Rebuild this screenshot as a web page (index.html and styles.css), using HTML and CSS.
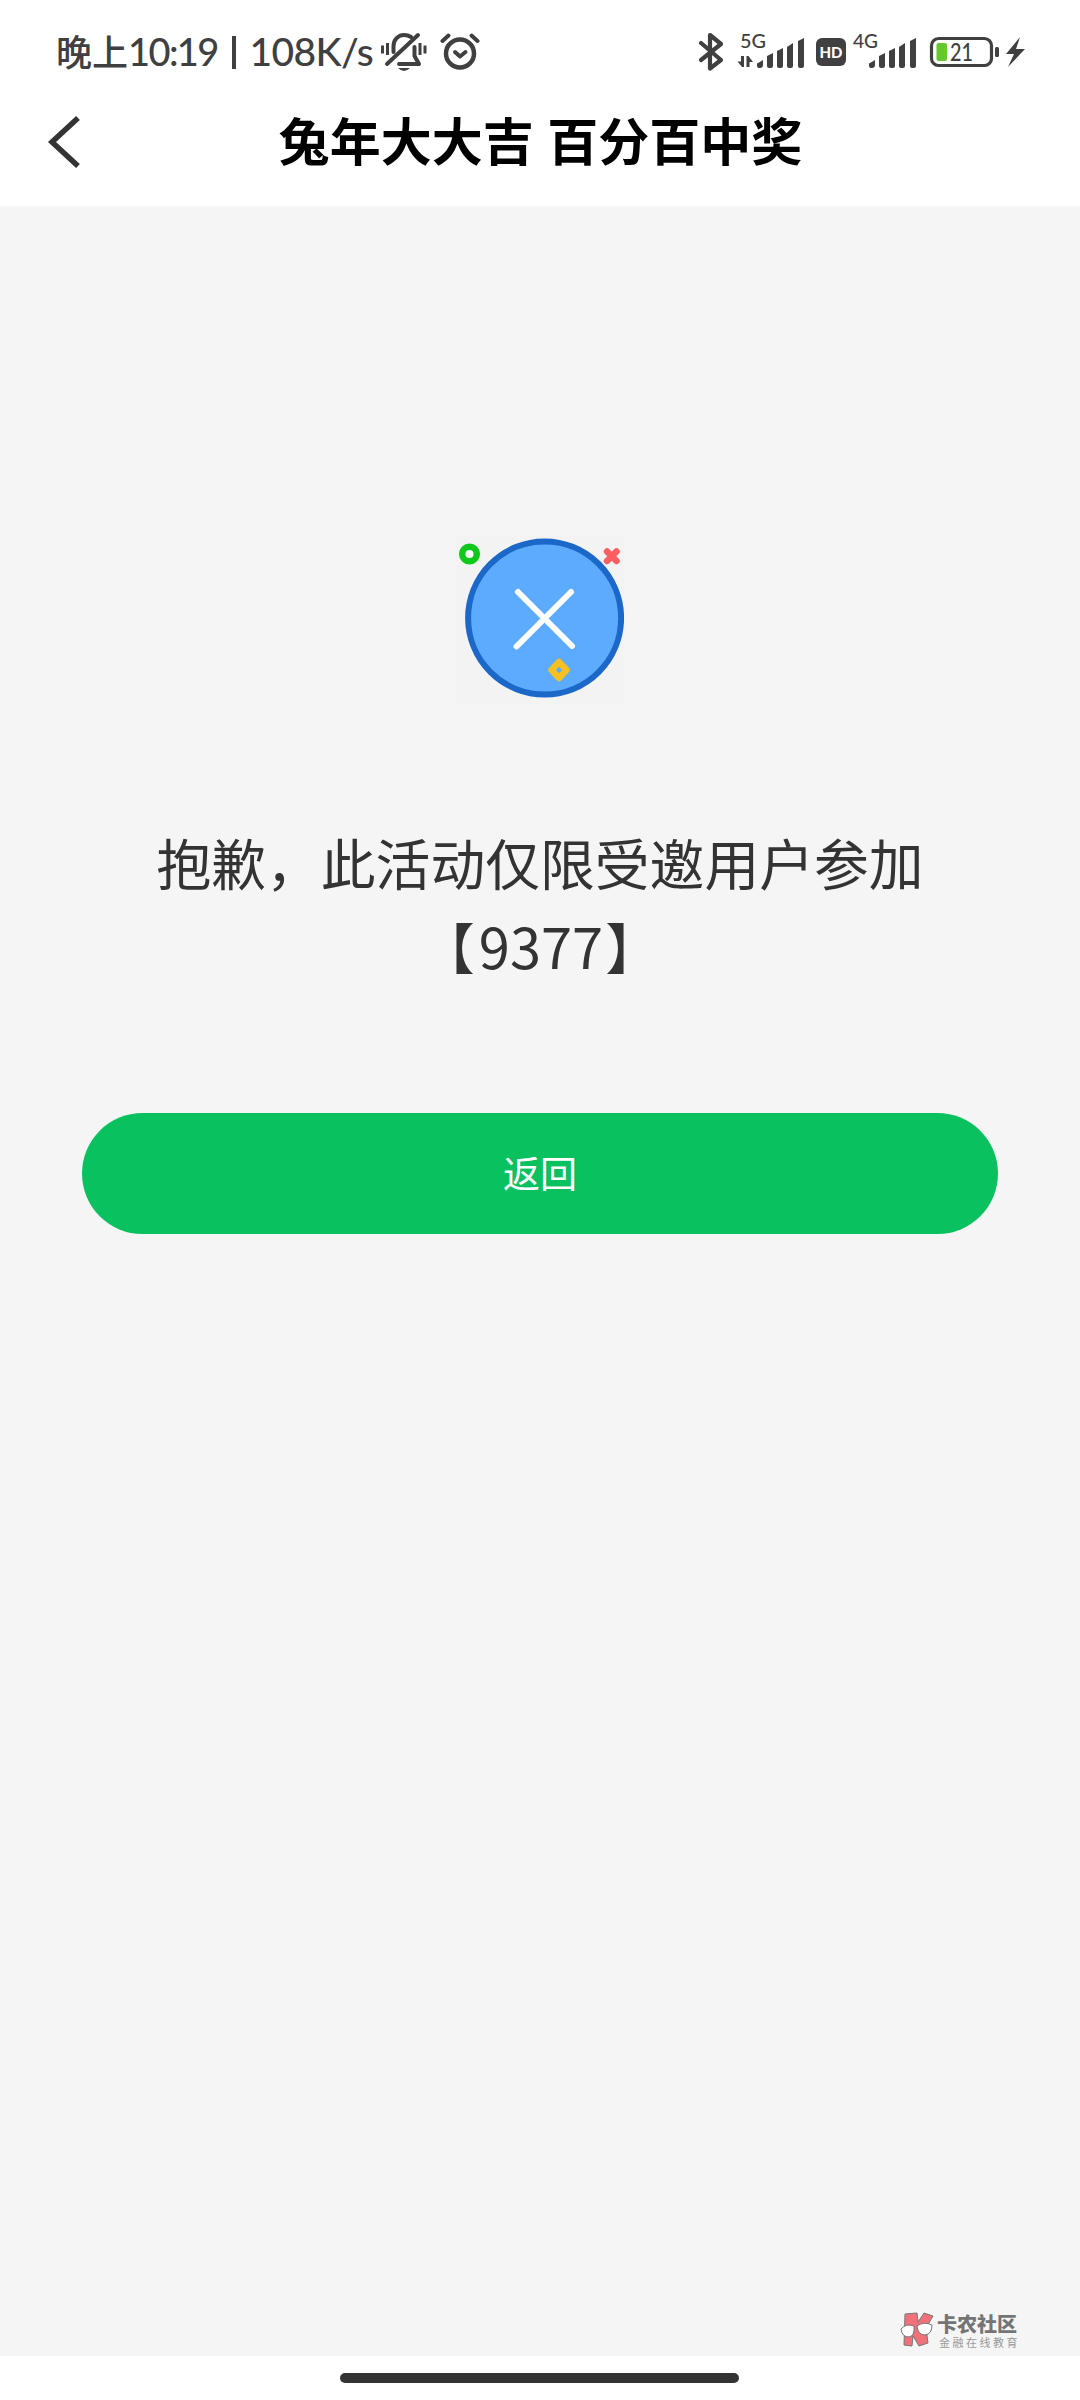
FILE: index.html
```html
<!DOCTYPE html>
<html lang="zh-CN">
<head>
<meta charset="utf-8">
<title>兔年大大吉 百分百中奖</title>
<link rel="stylesheet" href="styles.css">
</head>
<body>
<div class="screen">
  <div class="status">
    <div class="status-left">
      <span class="cjk">晚上</span><span class="clock">10:19</span><span class="divider"></span><span class="speed">108K/s</span>
      <svg class="bell" width="46" height="40" viewBox="0 0 46 40" fill="none" stroke="#404040" stroke-width="4" stroke-linecap="round">
        <path d="M12.500 20V14C12.500 7 18 3 23 3q4 0 7 2M6 32 37 3M33.500 15v9l4.500 8H18" stroke-linejoin="round"/>
        <path d="M1.500 13.500v8M6.500 11v12M39 11v12M44 13.500v8" stroke-width="3" stroke-linecap="butt"/>
        <path d="M17 36h12q-6 6-12 0z" fill="#404040" stroke="none"/>
      </svg>
      <svg class="alarm" width="40" height="40" viewBox="0 0 40 40" fill="none" stroke="#404040" stroke-width="4.500" stroke-linecap="round" stroke-linejoin="round">
        <circle cx="20" cy="21.500" r="14"/><path d="m15 20 5 4.500 5.500-4.500" stroke-width="4"/><path d="m2.500 9 6-5.500M37.500 9l-6-5.500" stroke-width="4"/>
      </svg>
    </div>
    <svg class="status-right" width="330" height="44" viewBox="696 30 330 44">
      <g fill="none" stroke="#404040" stroke-width="4.200" stroke-linejoin="round" stroke-linecap="round"><path d="m701 43 20 17-11 8.500V35L721 44 701 60"/></g>
      <g fill="#404040">
        <text class="net" x="740" y="48" textLength="26" lengthAdjust="spacingAndGlyphs">5G</text>
        <path d="M741 56h3v11h-2l-4.500-5.500h3.500zM746.500 67V56h2l4.500 6h-3.500v5z"/>
        <path id="bars" d="M757 64q0-1 1-1l5-3v5q0 3-3 3h-1q-2 0-2-2zM767 56l6-3v13q0 2-2 2h-2q-2 0-2-2zM777 51l6-3v18q0 2-2 2h-2q-2 0-2-2zM787 47l6-4v23q0 2-2 2h-2q-2 0-2-2zM798 41l6-3v28q0 2-2 2h-2q-2 0-2-2z"/>
        <use href="#bars" x="112"/>
        <rect x="816" y="38" width="30" height="28" rx="6"/>
        <text class="net" x="853" y="48" textLength="25" lengthAdjust="spacingAndGlyphs">4G</text>
        <rect x="995" y="47" width="4" height="10" rx="1.500"/>
        <path d="m1020 37-14 17h8l-6 13 17-18h-9z"/>
      </g>
      <text class="hd" x="819.500" y="58" textLength="23" lengthAdjust="spacingAndGlyphs">HD</text>
      <rect x="931.500" y="38.500" width="60" height="27" rx="7" fill="none" stroke="#404040" stroke-width="3.200"/>
      <rect x="936.500" y="43" width="10.500" height="18" rx="2" fill="#63c92c"/>
      <text class="level" x="950" y="61" textLength="23" lengthAdjust="spacingAndGlyphs">21</text>
    </svg>
  </div>
  <header class="nav">
    <svg class="back" width="36" height="52" viewBox="0 0 36 52" fill="none" stroke="#333" stroke-width="5.500"><path d="M32 2 6 26l26 24"/></svg>
    <h1 class="title">兔年大大吉 百分百中奖</h1>
  </header>
  <main class="content">
    <svg class="emblem" width="168" height="168" viewBox="456 536 168 168">
      <rect x="456" y="536" width="168" height="168" fill="#f3f3f3"/>
      <circle cx="544.600" cy="618" r="76.500" fill="#5cabff" stroke="#1b68c8" stroke-width="6"/>
      <path d="m518 592 54 54M571 592l-54.500 54.500" stroke="#fff" stroke-width="6" stroke-linecap="round"/>
      <circle cx="469.500" cy="554" r="7.300" fill="#fff" stroke="#0fc81c" stroke-width="6.500"/>
      <path d="m607 551.500 9.500 9.500m0-9.500-9.500 9.500" stroke="#fa5e60" stroke-width="6.500" stroke-linecap="round"/>
      <path d="m559 662 7.500 8-7.500 8-7.500-8z" fill="none" stroke="#f6c022" stroke-width="6.500" stroke-linejoin="round"/>
    </svg>
    <p class="message">抱歉，此活动仅限受邀用户参加<br>【<span class="code">9377</span>】</p>
    <button class="return">返回</button>
    <div class="brand">
      <svg width="34" height="36" viewBox="0 0 34 36" stroke="#777" stroke-width="1">
        <path d="M5 2 17 1l1 9 6-9 9 3-7 12 2 15-9 3-6-10-1 10-8-1z" fill="#f0717a"/>
        <path d="M1 17q5-6 13-3 1 10-5 11-7 0-8-8zM17 14q7-5 15-1 0 9-7 10-7 0-8-9z" fill="#fff"/>
      </svg>
      <div class="brand-text"><div class="brand-name">卡农社区</div><div class="brand-sub">金融在线教育</div></div>
    </div>
  </main>
  <footer class="gesture"><div class="handle"></div></footer>
</div>
</body>
</html>
```
FILE: styles.css
```css
* { box-sizing: border-box; }
body { margin: 0; background: #fff; font-family: "Noto Sans CJK SC", sans-serif; }
.screen { width: 1080px; height: 2400px; display: flex; flex-direction: column; overflow: hidden; }
.status { height: 104px; padding: 30px 54px 30px 56px; display: flex; justify-content: space-between; align-items: flex-start; }
.status-left { display: flex; align-items: center; height: 44px; color: #404040; white-space: nowrap; }
.cjk { width: 72px; height: 46px; font-size: 36px; font-weight: 500; line-height: 42px; }
.clock, .speed { height: 46px; font-family: Lato, sans-serif; font-size: 39px; font-weight: 500; line-height: 44px; }
.clock { width: 91px; font-size: 38px; letter-spacing: -1.6px; }
.speed { width: 125px; margin-left: 14px; letter-spacing: -0.6px; }
.divider { width: 3.5px; height: 33px; margin-left: 13px; background: #404040; }
.bell { margin-left: 6px; }
.alarm { margin-left: 13px; }
.net { font: 500 19px Lato, sans-serif; }
.hd { font: 900 15px Lato, sans-serif; fill: #fff; }
.level { font: 500 24px Lato, sans-serif; fill: #404040; }
.nav { height: 102px; padding: 12px 46px 0; display: grid; grid-template-columns: 36px 1fr 36px; align-items: start; }
.title { margin: -1px 0 0 1px; font-size: 51px; font-weight: 700; line-height: 48px; word-spacing: 2px; text-align: center; color: #000; }
.content { height: 2150px; background: #f5f5f5; display: flex; flex-direction: column; align-items: center; padding: 330px 60px 8px; }
.emblem { flex: none; }
.message { margin: 115px 0 0; color: #333; font-size: 54.8px; line-height: 84px; text-align: center; white-space: nowrap; }
.code { padding: 0 2px 0 4px; font-size: 56px; line-height: 1; }
.return { width: 916px; height: 121px; margin: 126px 0 0; padding: 0 0 4px; border: 0; border-radius: 61px; background: #0ac160; color: #fff; font: 37px "Noto Sans CJK SC", sans-serif; }
.brand { display: flex; gap: 3px; margin-top: auto; align-self: flex-end; }
.brand-text { display: flex; flex-direction: column; white-space: nowrap; }
.brand-name { font-size: 20px; line-height: 24px; font-weight: 900; color: #757575; }
.brand-sub { padding-left: 2px; font-size: 11px; line-height: 12px; letter-spacing: 2.500px; color: #999; }
.gesture { height: 44px; display: flex; justify-content: center; padding-top: 17px; }
.handle { width: 399px; height: 10px; margin-right: 2px; border-radius: 5px; background: #333; }
```
